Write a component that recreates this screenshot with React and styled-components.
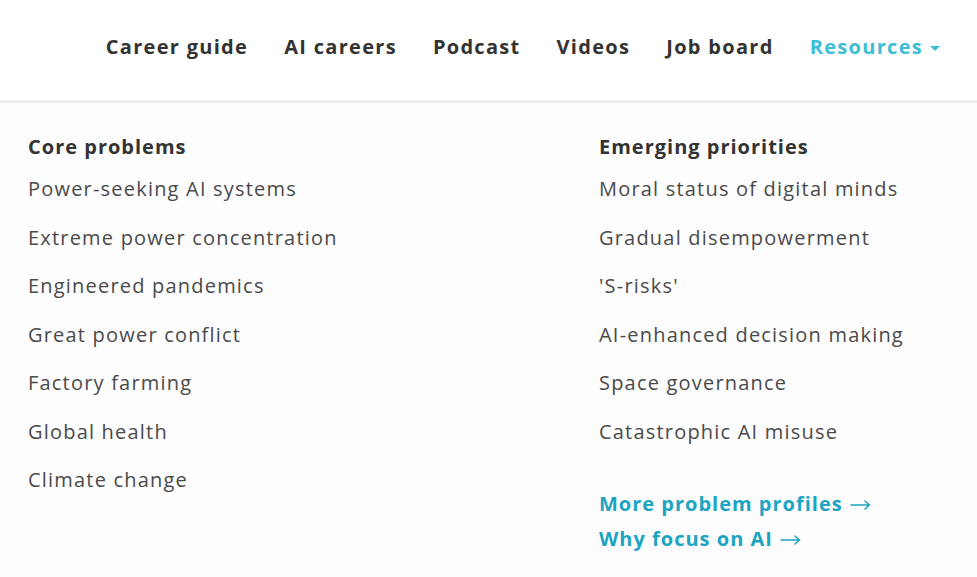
import React from "react";
import styled, { createGlobalStyle } from "styled-components";

const Global = createGlobalStyle`
  html, body { margin: 0; padding: 0; background: #ffffff; }
  body { font-family: "Open Sans", "Liberation Sans", sans-serif; -webkit-font-smoothing: antialiased; }
  * { box-sizing: border-box; }
`;

const Page = styled.div`
  width: 977px;
  height: 577px;
  overflow: hidden;
  background: #ffffff;
`;

const Header = styled.header`
  height: 100px;
  display: flex;
  align-items: center;
  justify-content: flex-end;
  padding-right: 19px;
  padding-bottom: 6px;
`;

const NavItem = styled.a`
  display: flex;
  align-items: center;
  gap: 8px;
  padding: 0 18px;
  font-size: 20px;
  font-weight: 700;
  line-height: 28px;
  letter-spacing: 1.3px;
  color: ${(p) => (p.$active ? "#3dbdd6" : "#333333")};
  text-decoration: none;
  white-space: nowrap;
`;

const Caret = styled.span`
  width: 0;
  height: 0;
  border-left: 5px solid transparent;
  border-right: 5px solid transparent;
  border-top: 5px solid #3dbdd6;
  margin-top: 2px;
  margin-left: -1px;
`;

const Panel = styled.div`
  border-top: 3px solid #eeeeee;
  background: #fdfdfd;
  height: 477px;
  padding: 30px 0 0 28px;
  display: grid;
  grid-template-columns: 571px 1fr;
`;

const Column = styled.div`
  display: flex;
  flex-direction: column;
`;

const Heading = styled.div`
  font-size: 20px;
  font-weight: 700;
  line-height: 28px;
  letter-spacing: 1px;
  color: #333333;
  margin-bottom: 4px;
`;

const Item = styled.a`
  font-size: 20px;
  font-weight: 400;
  line-height: 28px;
  letter-spacing: 1.2px;
  padding: 10.25px 0;
  color: #4a4a4a;
  text-decoration: none;
  white-space: nowrap;
`;

const LinkList = styled.div`
  margin-top: 30px;
  display: flex;
  flex-direction: column;
`;

const MoreLink = styled.a`
  display: flex;
  align-items: center;
  gap: 7px;
  font-size: 20px;
  font-weight: 700;
  line-height: 35px;
  letter-spacing: 1px;
  color: #1ba5c2;
  text-decoration: none;
  white-space: nowrap;
`;

const ArrowSvg = styled.svg`
  width: 21px;
  height: 12px;
  margin-top: 2px;
  flex: none;
`;

const Arrow = () => (
  <ArrowSvg viewBox="0 0 21 12" fill="none" stroke="#1ba5c2" strokeWidth="1.6" strokeLinecap="round" strokeLinejoin="round">
    <path d="M1 6h18.5M15 2l4.5 4-4.5 4" />
  </ArrowSvg>
);

const nav = ["Career guide", "AI careers", "Podcast", "Videos", "Job board"];
const core = [
  "Power-seeking AI systems",
  "Extreme power concentration",
  "Engineered pandemics",
  "Great power conflict",
  "Factory farming",
  "Global health",
  "Climate change",
];
const emerging = [
  "Moral status of digital minds",
  "Gradual disempowerment",
  "'S-risks'",
  "AI-enhanced decision making",
  "Space governance",
  "Catastrophic AI misuse",
];

export default function App() {
  return (
    <Page>
      <Global />
      <Header>
        {nav.map((n) => (
          <NavItem key={n}>{n}</NavItem>
        ))}
        <NavItem $active>
          Resources <Caret />
        </NavItem>
      </Header>
      <Panel>
        <Column>
          <Heading>Core problems</Heading>
          {core.map((c) => (
            <Item key={c}>{c}</Item>
          ))}
        </Column>
        <Column>
          <Heading>Emerging priorities</Heading>
          {emerging.map((c) => (
            <Item key={c}>{c}</Item>
          ))}
          <LinkList>
            <MoreLink>
              More problem profiles <Arrow />
            </MoreLink>
            <MoreLink>
              Why focus on AI <Arrow />
            </MoreLink>
          </LinkList>
        </Column>
      </Panel>
    </Page>
  );
}
